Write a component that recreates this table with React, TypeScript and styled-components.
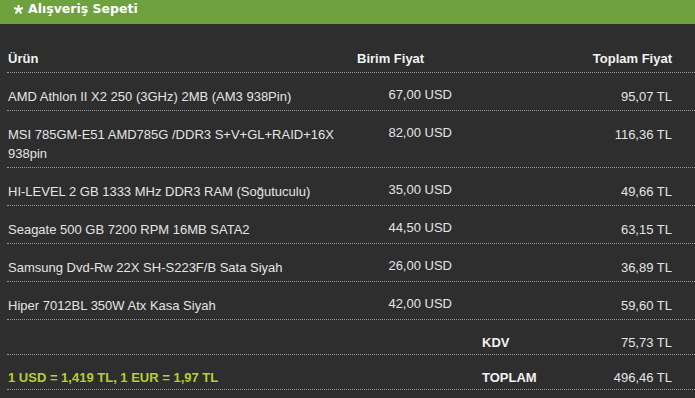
import styled, { createGlobalStyle } from 'styled-components';

const GlobalStyle = createGlobalStyle`
  html, body {
    margin: 0;
    padding: 0;
    background: #2e2e2e;
  }
  body {
    font-family: 'Liberation Sans', Arial, sans-serif;
    font-size: 13px;
    color: #e4e4e4;
  }
`;

type Item = {
  name: string;
  price: string;
  total: string;
};

const items: Item[] = [
  { name: 'AMD Athlon II X2 250 (3GHz) 2MB (AM3 938Pin)', price: '67,00 USD', total: '95,07 TL' },
  { name: 'MSI 785GM-E51 AMD785G /DDR3 S+V+GL+RAID+16X 938pin', price: '82,00 USD', total: '116,36 TL' },
  { name: 'HI-LEVEL 2 GB 1333 MHz DDR3 RAM (Soğutuculu)', price: '35,00 USD', total: '49,66 TL' },
  { name: 'Seagate 500 GB 7200 RPM 16MB SATA2', price: '44,50 USD', total: '63,15 TL' },
  { name: 'Samsung Dvd-Rw 22X SH-S223F/B Sata Siyah', price: '26,00 USD', total: '36,89 TL' },
  { name: 'Hiper 7012BL 350W Atx Kasa Siyah', price: '42,00 USD', total: '59,60 TL' },
];

const TitleBar = styled.div`
  height: 24px;
  box-sizing: border-box;
  padding: 0 0 6px 14px;
  background: #70a13f;
  display: flex;
  align-items: center;
  gap: 5px;
  font-family: 'DejaVu Sans', Verdana, sans-serif;
  font-weight: bold;
  font-size: 12.5px;
  line-height: 18px;
  color: #ffffff;
`;

const Cart = styled.div`
  margin-left: 7px;
  padding-top: 25px;
`;

const Row = styled.div`
  display: grid;
  grid-template-columns: 350px 95px 1fr auto;
  border-bottom: 1px dotted #9a9a9a;
  line-height: 19px;
`;

const Cell = styled.div<{ $span?: string; $align?: 'left' | 'right'; $top?: number; $bottom?: number }>`
  grid-column: ${(p) => p.$span || 'auto'};
  text-align: ${(p) => p.$align || 'left'};
  padding-top: ${(p) => p.$top ?? 14}px;
  padding-bottom: ${(p) => p.$bottom ?? 4}px;
`;

const NameCell = styled(Cell)`
  padding-left: 1px;
  padding-right: 20px;
`;

const TotalCell = styled(Cell)`
  padding-right: 23px;
`;

const HeadCell = styled(Cell)`
  font-weight: bold;
  color: #f2f2f2;
`;

const LabelCell = styled(Cell)`
  padding-left: 30px;
  font-weight: bold;
  color: #f2f2f2;
`;

const RateNote = styled(NameCell)`
  font-weight: bold;
  color: #b7cf2f;
`;

function Star() {
  const arms = [-90, -18, 54, 126, 198];
  return (
    <svg width="9" height="9" viewBox="-4.5 -4.5 9 9" style={{ marginTop: 1 }}>
      {arms.map((a) => {
        const r = (a * Math.PI) / 180;
        return (
          <line
            key={a}
            x1={0}
            y1={0}
            x2={Math.cos(r) * 4.1}
            y2={Math.sin(r) * 4.1}
            stroke="#ffffff"
            strokeWidth={2}
            strokeLinecap="round"
          />
        );
      })}
    </svg>
  );
}

export default function App() {
  return (
    <>
      <GlobalStyle />
      <TitleBar>
        <Star />
        <span>Alışveriş Sepeti</span>
      </TitleBar>
      <Cart>
        <Row>
          <HeadCell $top={0} style={{ paddingLeft: 1 }}>Ürün</HeadCell>
          <HeadCell $top={0}>Birim Fiyat</HeadCell>
          <HeadCell $top={0} $span="3 / 5" $align="right" style={{ paddingRight: 23 }}>
            Toplam Fiyat
          </HeadCell>
        </Row>
        {items.map((item) => (
          <Row key={item.name}>
            <NameCell>{item.name}</NameCell>
            <Cell $align="right" $top={12}>{item.price}</Cell>
            <TotalCell $span="3 / 5" $align="right">{item.total}</TotalCell>
          </Row>
        ))}
        <Row>
          <NameCell $span="1 / 3" $top={13} $bottom={2} />
          <LabelCell $top={13} $bottom={2}>KDV</LabelCell>
          <TotalCell $align="right" $top={13} $bottom={2}>75,73 TL</TotalCell>
        </Row>
        <Row>
          <RateNote $span="1 / 3" $top={13} $bottom={2}>1 USD = 1,419 TL, 1 EUR = 1,97 TL</RateNote>
          <LabelCell $top={13} $bottom={2}>TOPLAM</LabelCell>
          <TotalCell $align="right" $top={13} $bottom={2}>496,46 TL</TotalCell>
        </Row>
      </Cart>
    </>
  );
}
